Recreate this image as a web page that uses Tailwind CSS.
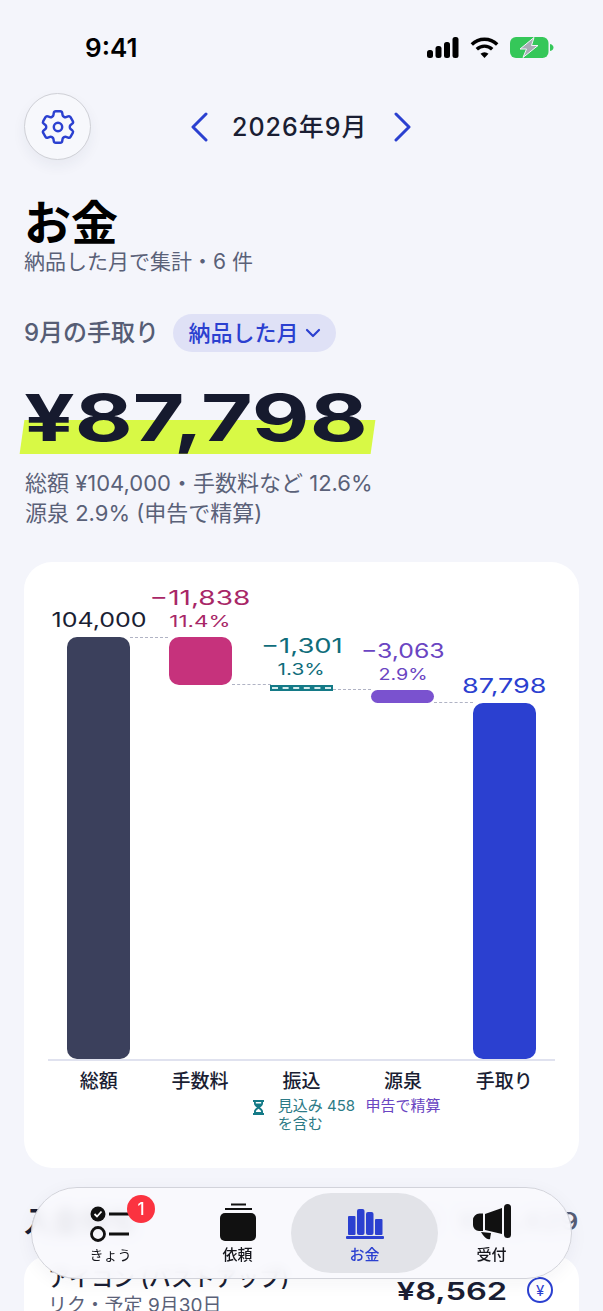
<!DOCTYPE html>
<html lang="ja">
<head>
  <meta charset="UTF-8" />
  <meta name="viewport" content="width=device-width, initial-scale=1.0"/>
  <title>お金</title>
  <script src="https://cdn.jsdelivr.net/npm/@tailwindcss/browser@4"></script>
</head>
<body class="bg-[#f4f5fb]">
  <div class="relative h-[1311px] w-[603px] overflow-hidden bg-[#f4f5fb] font-['Inter','Noto_Sans_CJK_JP',sans-serif] text-[#1a1e33]">

    <!-- Status bar -->
    <div class="flex h-[93px] items-start justify-between pl-[85px] pr-[49px] pt-[33px]">
      <span class="text-[26px] font-semibold leading-[30px] text-black">9:41</span>
      <div class="mt-[4px] flex items-center gap-[11px]">
        <svg width="32" height="21" viewBox="0 0 32 21"><rect x="0" y="13" width="6" height="8" rx="2.5"/><rect x="8.5" y="9" width="6" height="12" rx="2.5"/><rect x="17" y="5" width="6" height="16" rx="2.5"/><rect x="25.500" y="0" width="6" height="21" rx="2.500"/></svg>
        <svg width="29" height="21" viewBox="0 0 29 21" fill="none" stroke="#000" stroke-width="3.400"><path d="M1.800 7.500a18 18 0 0 1 25.400 0"/><path d="M6.800 12.300a11 11 0 0 1 15.400 0"/><path d="M14.500 21l-4-4.200a5.800 5.800 0 0 1 8 0z" fill="#000" stroke="none"/></svg>
        <svg width="44" height="21" viewBox="0 0 44 21"><rect x="0" y="0" width="38.500" height="21" rx="6" fill="#35c759"/><path d="M40 7c2.500.5 3.500 2 3.500 3.500S42.500 13.500 40 14z" fill="#35c759"/><path d="M24 .5L10 12h6.500L13 20.500 28 8.500h-6.500z" fill="#a9abb5" stroke="#f4f5fb" stroke-width="1"/></svg>
      </div>
    </div>

    <!-- Month header -->
    <div class="relative flex h-[67px] items-center px-[24px]">
      <button class="flex h-[67px] w-[67px] items-center justify-center rounded-full border border-[#cfd0d6] bg-[#f7f8fc] shadow-[0_6px_14px_rgba(40,45,80,0.06)]">
        <svg width="42" height="42" viewBox="0 0 24 24" fill="none" stroke="#2b40d0" stroke-width="1.400" stroke-linejoin="round"><path d="M9.594 3.940c.09-.542.56-.94 1.110-.94h2.593c.55 0 1.020.398 1.110.94l.213 1.281c.063.374.313.686.645.87.074.04.147.083.22.127.325.196.72.257 1.075.124l1.217-.456a1.125 1.125 0 0 1 1.370.49l1.296 2.247a1.125 1.125 0 0 1-.26 1.431l-1.003.827c-.293.241-.438.613-.43.992a7.723 7.723 0 0 1 0 .255c-.008.378.137.75.43.991l1.004.827c.424.35.534.955.26 1.430l-1.298 2.247a1.125 1.125 0 0 1-1.369.491l-1.217-.456c-.355-.133-.75-.072-1.076.124a6.470 6.470 0 0 1-.22.128c-.331.183-.581.495-.644.869l-.213 1.281c-.09.543-.56.94-1.110.94h-2.594c-.55 0-1.019-.398-1.110-.94l-.213-1.281c-.062-.374-.312-.686-.644-.87a6.520 6.520 0 0 1-.22-.127c-.325-.196-.72-.257-1.076-.124l-1.217.456a1.125 1.125 0 0 1-1.369-.49l-1.297-2.247a1.125 1.125 0 0 1 .26-1.431l1.004-.827c.292-.24.437-.613.43-.991a6.932 6.932 0 0 1 0-.255c.007-.38-.138-.751-.43-.992l-1.004-.827a1.125 1.125 0 0 1-.26-1.430l1.297-2.247a1.125 1.125 0 0 1 1.370-.491l1.216.456c.356.133.751.072 1.076-.124.072-.044.146-.086.22-.128.332-.183.582-.495.644-.869l.214-1.280Z"/><circle cx="12" cy="12" r="2.400"/></svg>
      </button>
      <div class="ml-[99px] flex items-center">
        <svg width="20" height="30" viewBox="0 0 20 30" fill="none" stroke="#2b40d0" stroke-width="3" stroke-linecap="round" stroke-linejoin="round"><path d="M16 2L3 15l13 13"/></svg>
        <span class="ml-[22px] w-[140px] whitespace-nowrap text-[25px] font-medium leading-[30px] tracking-[1px]">2026年9月</span>
        <svg class="ml-[20px]" width="20" height="30" viewBox="0 0 20 30" fill="none" stroke="#2b40d0" stroke-width="3" stroke-linecap="round" stroke-linejoin="round"><path d="M4 2l13 13L4 28"/></svg>
      </div>
    </div>

    <!-- Title -->
    <div class="mt-[38px] px-[24px]">
      <h1 class="text-[47px] font-bold leading-[50px] text-black">お金</h1>
      <p class="text-[21px] leading-[27px] text-[#5a6178]">納品した月で集計・6 件</p>
    </div>

    <!-- Summary -->
    <div class="mt-[39px] flex items-center px-[24px]">
      <span class="text-[24px] font-medium leading-[30px] text-[#565d75]">9月の手取り</span>
      <button class="ml-[14px] flex h-[38px] w-[163px] items-center justify-center gap-[6px] rounded-full bg-[#dfe1f6] text-[22px] font-medium text-[#2b40d0]">納品した月
        <svg width="16" height="10" viewBox="0 0 16 10" fill="none" stroke="#2b40d0" stroke-width="2.200" stroke-linecap="round" stroke-linejoin="round"><path d="M2 2l6 6 6-6"/></svg>
      </button>
    </div>

    <div class="relative mt-[35px] h-[70px] px-[24px]">
      <div class="absolute left-[22px] top-[33px] h-[34px] w-[351px] -skew-x-[8deg] bg-[#d8f945]"></div>
      <div class="relative origin-left scale-x-[1.37] whitespace-nowrap text-[65px] font-bold leading-[62px] text-[#161a2e]">¥87,798</div>
    </div>

    <p class="mt-[11px] px-[25px] text-[22px] leading-[30px] text-[#5a6178]">総額 ¥104,000・手数料など 12.6%<br>源泉 2.9% (申告で精算)</p>

    <!-- Waterfall card -->
    <section class="mt-[34px] mx-[24px] h-[606px] rounded-[28px] bg-white px-[24px]">
      <div class="grid h-[499px] grid-cols-5 border-b-2 border-[#e0e2ef]">

        <div class="flex flex-col items-center justify-end">
          <div class="mb-[5px] scale-x-[1.25] text-[20px] leading-[24px] text-[#1a1e33]">104,000</div>
          <div class="relative h-[422px] w-[63px] rounded-[10px] bg-[#3b405c]">
            <div class="absolute left-full top-0 w-[38px] border-t-[1.5px] border-dashed border-[#b0b3c4]"></div>
          </div>
        </div>

        <div class="flex flex-col items-center justify-end">
          <div class="scale-x-[1.4] text-[20px] leading-[24px] text-[#a82767]">−11,838</div>
          <div class="mb-[5px] scale-x-[1.4] text-[16px] leading-[22px] text-[#a82767]">11.4%</div>
          <div class="relative mb-[374px] h-[48px] w-[63px] rounded-[10px] bg-[#c6327c]">
            <div class="absolute left-full bottom-0 w-[39px] border-t-[1.5px] border-dashed border-[#b0b3c4]"></div>
          </div>
        </div>

        <div class="flex flex-col items-center justify-end">
          <div class="scale-x-[1.37] text-[20px] leading-[24px] text-[#0f6d7b]">−1,301</div>
          <div class="mb-[5px] scale-x-[1.3] text-[16px] leading-[22px] text-[#0f6d7b]">1.3%</div>
          <div class="relative mb-[368px] flex h-[6px] w-[63px] items-center bg-[#147a87] px-[2px]">
            <div class="w-full border-t-2 border-dashed border-[#d5ecee]"></div>
            <div class="absolute left-full top-[4px] w-[38px] border-t-[1.5px] border-dashed border-[#b0b3c4]"></div>
          </div>
        </div>

        <div class="flex flex-col items-center justify-end">
          <div class="scale-x-[1.24] text-[20px] leading-[24px] text-[#6a45c2]">−3,063</div>
          <div class="mb-[5px] scale-x-[1.23] text-[16px] leading-[22px] text-[#6a45c2]">2.9%</div>
          <div class="relative mb-[356px] h-[13px] w-[63px] rounded-[7px] bg-[#7a52cf]">
            <div class="absolute left-full bottom-0 w-[39px] border-t-[1.5px] border-dashed border-[#b0b3c4]"></div>
          </div>
        </div>

        <div class="flex flex-col items-center justify-end">
          <div class="mb-[5px] scale-x-[1.35] text-[20px] leading-[24px] text-[#2b40d0]">87,798</div>
          <div class="h-[356px] w-[63px] rounded-[10px] bg-[#2b40d0]"></div>
        </div>
      </div>

      <div class="mt-[9px] grid grid-cols-5 text-center text-[19px] font-medium leading-[24px]">
        <div>総額</div>
        <div>手数料</div>
        <div>
          振込
          <div class="ml-[2px] mt-[3px] flex w-[112px] items-start gap-[14px] text-left text-[15px] font-normal leading-[18px] text-[#2c7a86]">
            <svg class="mt-[3px] shrink-0" width="11" height="15" viewBox="0 0 11 15" fill="#147a87"><path d="M0 0h11v2h-1v1.500c0 1.800-1.500 3-3 4 1.500 1 3 2.200 3 4V13h1v2H0v-2h1v-1.500c0-1.800 1.500-3 3-4-1.500-1-3-2.200-3-4V2H0zm2.800 3.500h5.400V2H2.800zM5.500 8.800c-1.300.8-2.500 1.700-2.700 3.200h5.400c-.2-1.500-1.400-2.400-2.700-3.200z"/></svg>
            <span class="whitespace-nowrap">見込み 458<br>を含む</span>
          </div>
        </div>
        <div>
          源泉
          <div class="mt-[3px] whitespace-nowrap text-[15px] font-normal leading-[18px] text-[#6a45c2]">申告で精算</div>
        </div>
        <div>手取り</div>
      </div>
    </section>

    <!-- Pending list (runs under the tab bar) -->
    <section class="mt-[36px] px-[24px]">
      <div class="flex items-center justify-between">
        <h2 class="text-[28px] font-bold leading-[32px]">入金待ち</h2>
        <div class="flex items-center gap-[44px] text-[#565d75]">
          <span class="text-[21px]">6 件</span>
          <span class="origin-right scale-x-[1.25] text-[24px] font-medium">¥28,429</span>
        </div>
      </div>
      <div class="mt-[16px] flex h-[120px] justify-between rounded-[24px] bg-white pl-[24px] pr-[26px] pt-[7px]">
        <div>
          <div class="whitespace-nowrap text-[22px] font-medium leading-[31px]">アイコン (バストアップ)</div>
          <div class="text-[19px] leading-[24px] text-[#5a6178]">リク・予定 9月30日</div>
        </div>
        <div class="mt-[14px] flex items-start gap-[20px]">
          <span class="origin-right scale-x-[1.36] text-[24px] font-semibold leading-[30px]">¥8,562</span>
          <span class="flex h-[26px] w-[26px] items-center justify-center rounded-full border-2 border-[#2b40d0] text-[15px] leading-none text-[#2b40d0]">¥</span>
        </div>
      </div>
    </section>

    <!-- Tab bar -->
    <nav class="absolute left-[31px] top-[1187px] flex h-[92px] w-[541px] items-center rounded-full border border-[#d2d3da] bg-[#f8f9fd]/92 px-[15px] shadow-[0_4px_18px_rgba(40,45,80,0.05)] backdrop-blur-[6px]">
      <a class="relative flex h-[80px] w-[127px] flex-col items-center justify-end pb-[9px] text-[14px] leading-[18px] text-[#15161c]">
        <svg class="mb-[4px]" width="42" height="36" viewBox="0 0 42 36"><circle cx="8" cy="8" r="7.500" fill="#111"/><path d="M4.500 8l2.500 2.500 4.500-5" fill="none" stroke="#fff" stroke-width="1.800"/><path d="M19 8h20M19 28h20" stroke="#111" stroke-width="3"/><circle cx="8" cy="28" r="6.500" fill="none" stroke="#111" stroke-width="2.800"/></svg>
        きょう
        <span class="absolute left-[80px] top-[2px] flex h-[28px] w-[28px] items-center justify-center rounded-full bg-[#fb3340] text-[17px] font-medium text-white">1</span>
      </a>
      <a class="flex h-[80px] w-[127px] flex-col items-center justify-end pb-[9px] text-[15px] font-medium leading-[18px] text-[#15161c]">
        <svg class="mb-[5px]" width="36" height="38" viewBox="0 0 36 38"><path d="M11 1.500h15M5 6h27" stroke="#111" stroke-width="2"/><rect x="0" y="10" width="36" height="28" rx="5" fill="#111"/></svg>
        依頼
      </a>
      <a class="-mx-[10px] flex h-[80px] w-[147px] flex-col items-center justify-end rounded-full bg-[#e2e3e8] pb-[9px] text-[15px] font-medium leading-[18px] text-[#2b40d0]">
        <svg class="mb-[7px]" width="38" height="32" viewBox="0 0 38 32" fill="#2b40d0"><rect x="2" y="9" width="7.500" height="19" rx="1"/><rect x="11" y="2" width="7.500" height="26" rx="2"/><rect x="20" y="5" width="7.500" height="23" rx="2"/><rect x="29" y="12" width="7.500" height="16" rx="1"/><rect x="0" y="29" width="38" height="3" rx="1"/></svg>
        お金
      </a>
      <a class="flex h-[80px] w-[127px] flex-col items-center justify-end pb-[9px] text-[15px] font-medium leading-[18px] text-[#15161c]">
        <svg class="mb-[6px]" width="38" height="36" viewBox="0 0 38 36" fill="#111"><rect x="31" y="0" width="7" height="34" rx="3.500"/><path d="M12 10L29 4v26L12 26z"/><path d="M10 9.500V27H6a6 6 0 0 1-6-6v-5a6.500 6.500 0 0 1 6.500-6.500z"/><path d="M8 28l10 1-1 6c-3 1-6-2-9-7z"/></svg>
        受付
      </a>
    </nav>
  </div>
</body>
</html>
